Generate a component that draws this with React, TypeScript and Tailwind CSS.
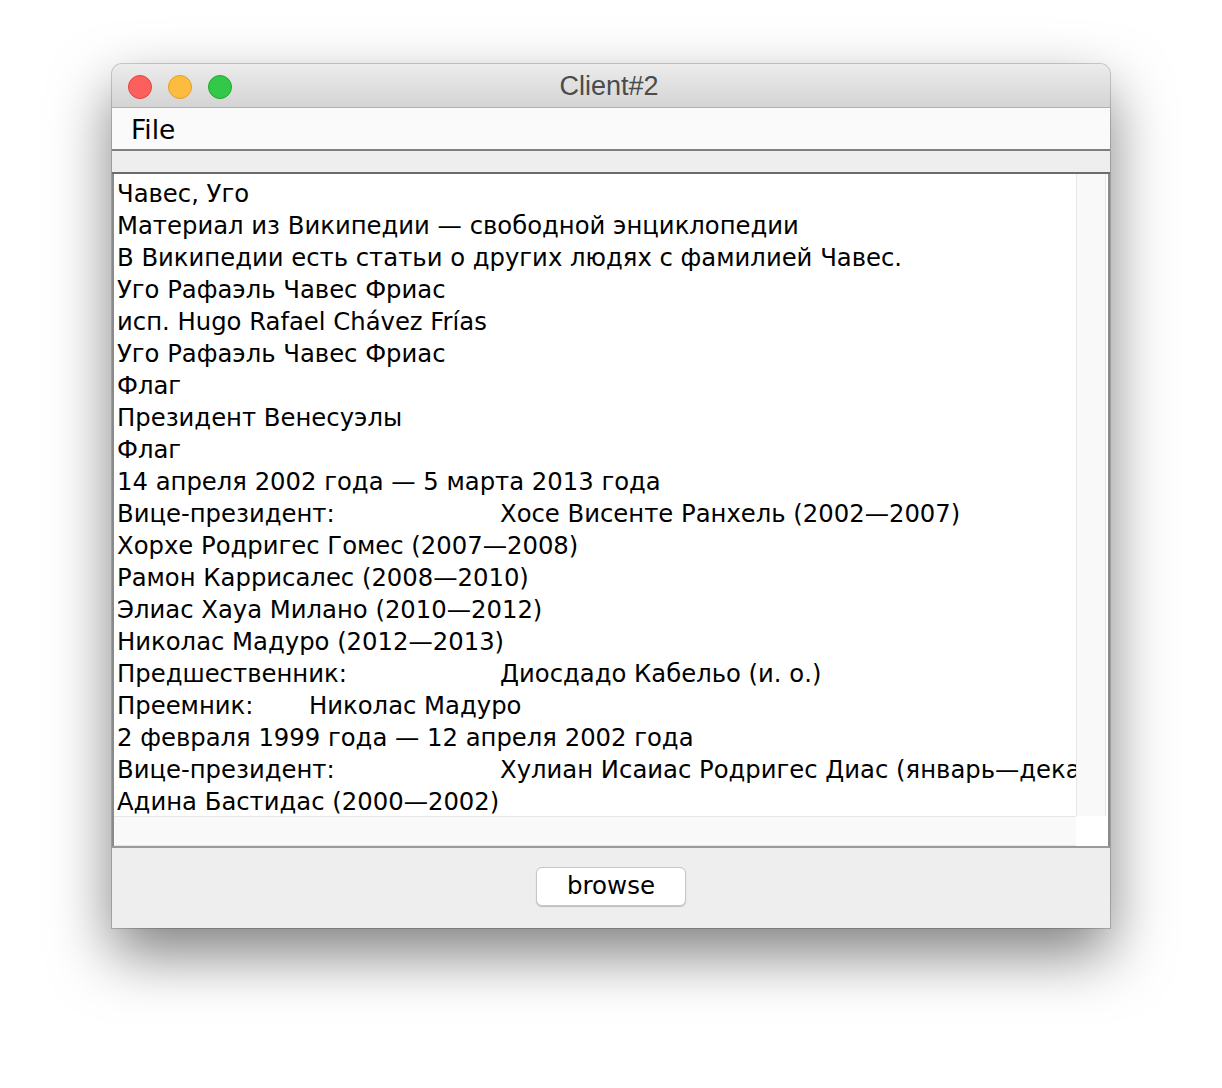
import React from "react";

type Line = { head: string; tab?: number; rest?: string };

const lines: Line[] = [
  { head: "Чавес, Уго" },
  { head: "Материал из Википедии — свободной энциклопедии" },
  { head: "В Википедии есть статьи о других людях с фамилией Чавес." },
  { head: "Уго Рафаэль Чавес Фриас" },
  { head: "исп. Hugo Rafael Chávez Frías" },
  { head: "Уго Рафаэль Чавес Фриас" },
  { head: "Флаг" },
  { head: "Президент Венесуэлы" },
  { head: "Флаг" },
  { head: "14 апреля 2002 года — 5 марта 2013 года" },
  { head: "Вице-президент:", tab: 383, rest: "Хосе Висенте Ранхель (2002—2007)" },
  { head: "Хорхе Родригес Гомес (2007—2008)" },
  { head: "Рамон Каррисалес (2008—2010)" },
  { head: "Элиас Хауа Милано (2010—2012)" },
  { head: "Николас Мадуро (2012—2013)" },
  { head: "Предшественник:", tab: 383, rest: "Диосдадо Кабельо (и. о.)" },
  { head: "Преемник:", tab: 192, rest: "Николас Мадуро" },
  { head: "2 февраля 1999 года — 12 апреля 2002 года" },
  { head: "Вице-президент:", tab: 383, rest: "Хулиан Исаиас Родригес Диас (январь—декабрь 2000)" },
  { head: "Адина Бастидас (2000—2002)" },
];

const TextLine = ({ head, tab, rest }: Line) => (
  <div className="flex h-[32px] items-center whitespace-nowrap pt-[4px] leading-[28px]">
    {tab ? (
      <>
        <span className="inline-block shrink-0" style={{ width: tab }}>
          {head}
        </span>
        <span>{rest}</span>
      </>
    ) : (
      <span>{head}</span>
    )}
  </div>
);

export default function App() {
  return (
    <div className="min-h-[1088px] w-[1222px] bg-white pl-[112px] pt-[64px]">
      <div className="flex h-[864px] w-[998px] flex-col overflow-hidden rounded-t-[10px] bg-[#eeeeee] shadow-[0_0_0_1px_rgba(0,0,0,0.18),0_26px_60px_rgba(0,0,0,0.5)]">
        {/* title bar */}
        <div className="relative flex h-[44px] shrink-0 items-center border-b border-[#b1b1b1] bg-gradient-to-b from-[#ececec] to-[#d4d4d4] pl-[16px]">
          <div className="flex gap-[16px] pt-[2px]">
            <span className="h-[24px] w-[24px] rounded-full border border-[#e0443e] bg-[#fc605c]" />
            <span className="h-[24px] w-[24px] rounded-full border border-[#dea123] bg-[#fdbc40]" />
            <span className="h-[24px] w-[24px] rounded-full border border-[#1aab29] bg-[#34c84a]" />
          </div>
          <div className="absolute inset-0 flex items-center justify-center pr-[4px] pt-[2px] font-['Liberation_Sans',sans-serif] text-[27px] text-[#4b4b4b]">
            Client#2
          </div>
        </div>

        {/* menu bar */}
        <div className="flex h-[41px] shrink-0 items-center bg-[#fafafa] pl-[19px] pt-[3px] font-['DejaVu_Sans',sans-serif] text-[26.5px] text-black">
          File
        </div>
        <div className="h-[2px] shrink-0 bg-[#7f7f7f]" />
        <div className="h-[21px] shrink-0 bg-[#eeeeee]" />
        <div className="h-[2px] shrink-0 bg-[#6c6c6c]" />

        {/* text area */}
        <div className="flex h-[672px] shrink-0 border-x-2 border-[#8a8a8a] bg-white">
          <div className="flex w-[962px] flex-col">
            <div className="h-[642px] overflow-hidden pl-[3px] pt-[2px] font-['DejaVu_Sans',sans-serif] text-[24.3px] text-black">
              {lines.map((l, i) => (
                <TextLine key={i} {...l} />
              ))}
            </div>
            <div className="h-[30px] border-y border-[#e6e6e6] bg-[#f9f9f9]" />
          </div>
          <div className="flex w-[30px] flex-col">
            <div className="h-[642px] border-x border-[#e6e6e6] bg-[#f9f9f9]" />
            <div className="h-[30px] bg-white" />
          </div>
        </div>
        <div className="h-[2px] shrink-0 bg-[#9a9a9a]" />

        {/* bottom panel */}
        <div className="flex flex-1 items-start justify-center bg-[#eeeeee] pt-[19px]">
          <button className="flex h-[39px] w-[150px] items-center justify-center rounded-[6px] border border-[#c6c6c6] bg-white font-['DejaVu_Sans',sans-serif] text-[24.5px] text-black shadow-[0_1px_1px_rgba(0,0,0,0.2)]">
            browse
          </button>
        </div>
      </div>
    </div>
  );
}
